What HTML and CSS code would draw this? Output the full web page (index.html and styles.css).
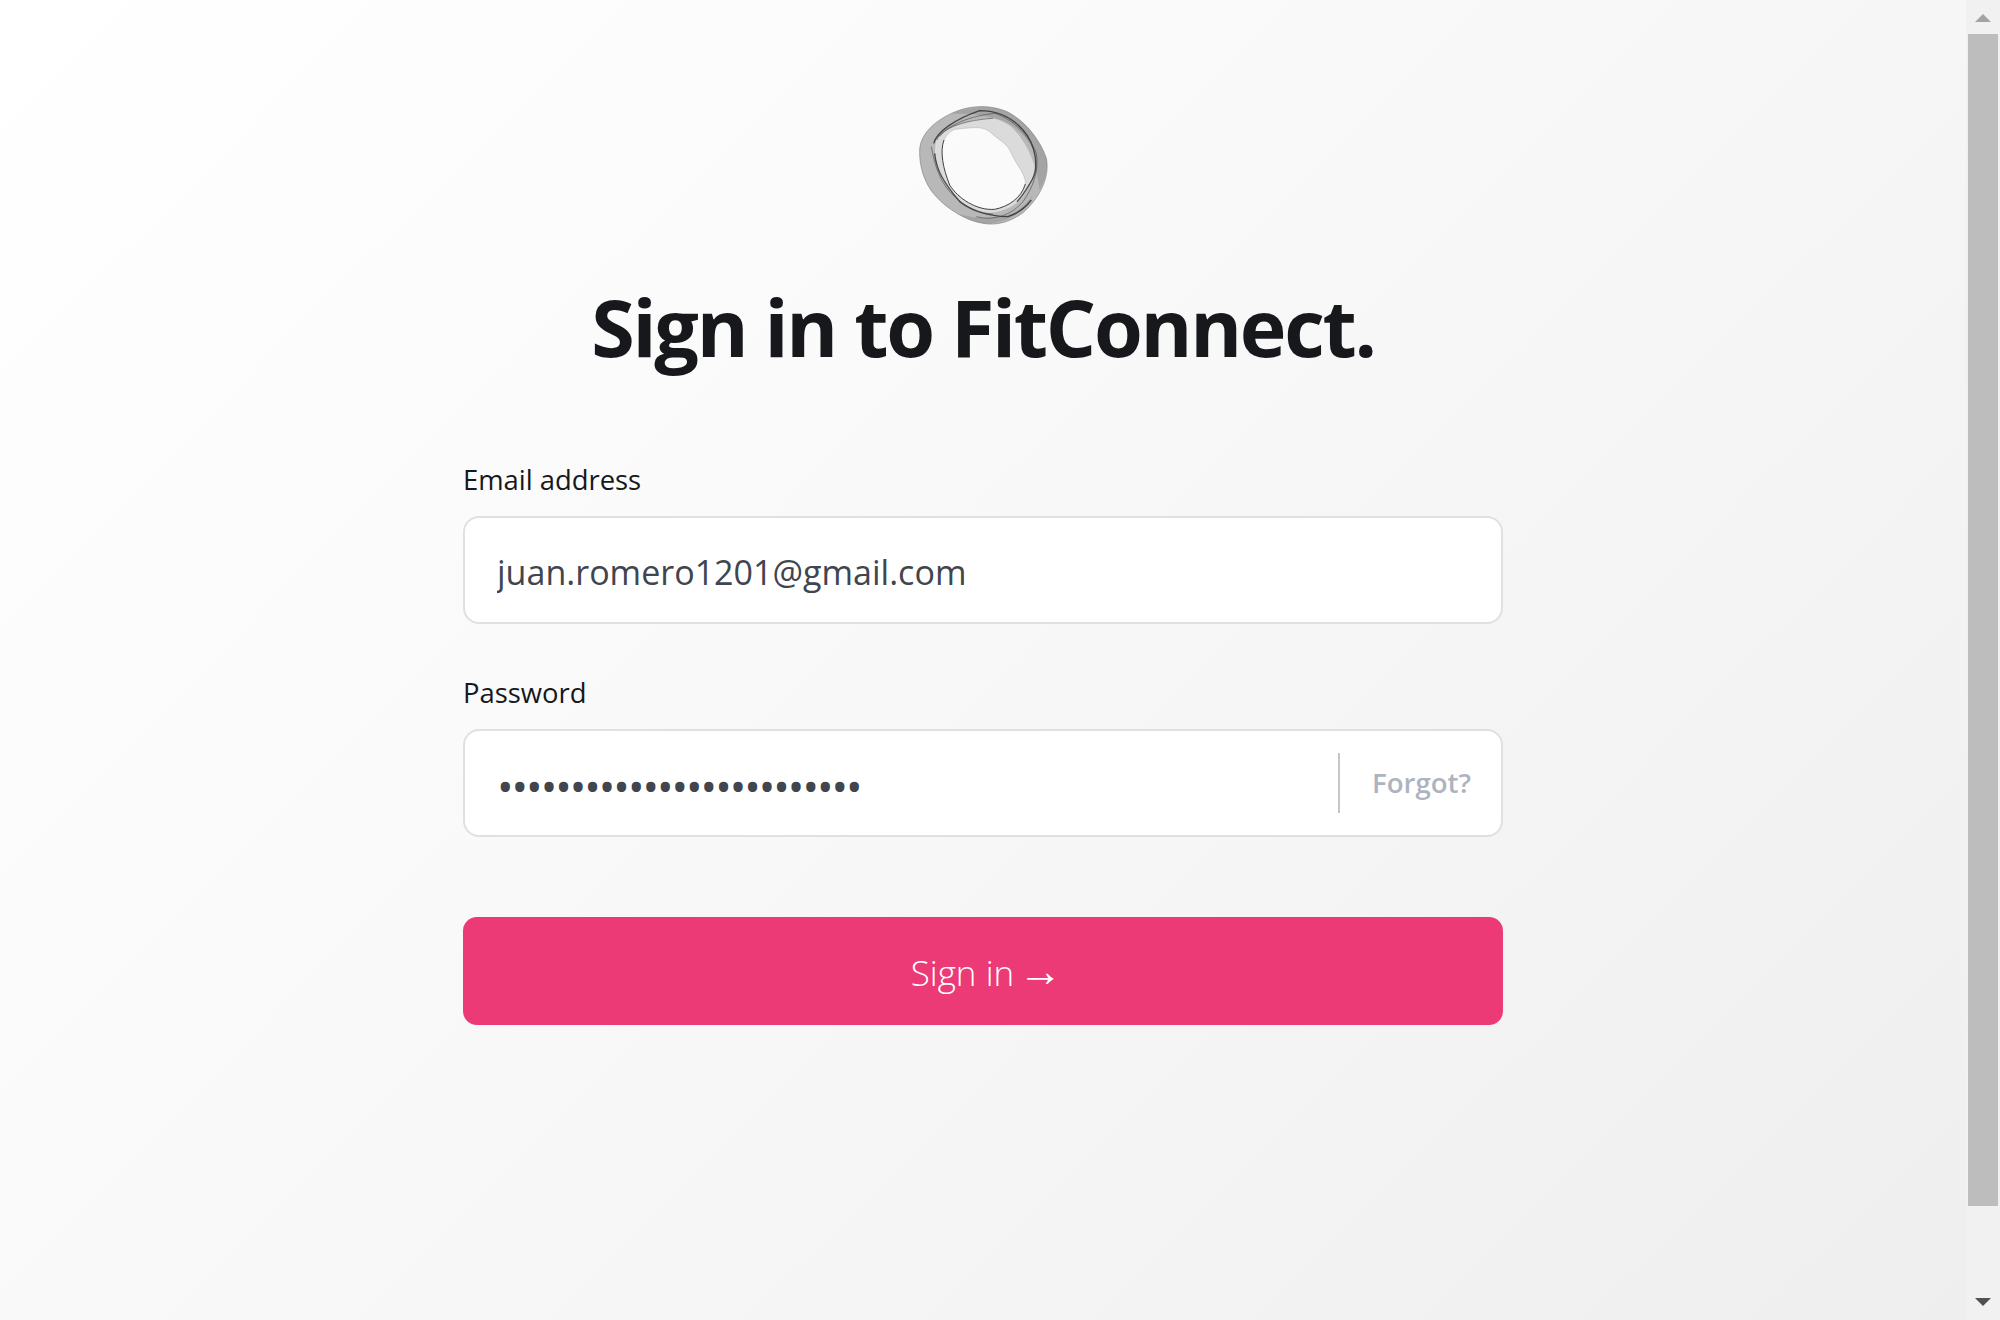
FILE: index.html
```html
<!DOCTYPE html>
<html lang="en">
<head>
<meta charset="utf-8">
<title>Sign in to FitConnect</title>
<link rel="stylesheet" href="styles.css">
</head>
<body>
<div class="page">
  <main class="content">
    <svg class="logo" viewBox="100 30 420 390" aria-hidden="true">
      <defs><filter id="soft"><feGaussianBlur stdDeviation="1.2"/></filter></defs>
      <g filter="url(#soft)">
        <path class="ring-light" fill-rule="evenodd" d="M120 180C122 135 160 95 220 68C265 48 320 42 375 62C430 85 480 145 500 205C512 260 480 325 430 368C395 395 350 408 310 400C260 392 205 360 165 315C135 280 118 230 120 180ZM193 150C180 185 190 235 210 285C235 325 290 362 345 358C385 350 425 325 437 282C440 255 410 225 395 190C385 160 350 145 330 125C305 105 265 115 225 118C210 125 200 135 193 150Z"/>
        <path class="ring-band" fill-rule="evenodd" d="M120 180C122 135 160 95 220 68C265 48 320 42 375 62C430 85 480 145 500 205C512 260 480 325 430 368C395 395 350 408 310 400C260 392 205 360 165 315C135 280 118 230 120 180ZM170 150C190 120 260 85 340 85C390 88 445 140 465 190C472 235 455 285 430 320C405 350 360 372 310 368C270 360 225 325 190 270C170 230 160 190 170 150Z"/>
        <path class="ring-band" fill-rule="evenodd" d="M215 72C265 50 325 45 375 62C430 85 480 145 500 205C505 235 497 270 480 300C470 230 450 165 395 110C345 75 270 70 215 72Z"/>
        <path class="ring-band" fill-rule="evenodd" d="M240 372C290 388 350 388 400 370C425 355 445 335 460 315C435 365 385 398 320 401C290 398 262 388 240 372Z"/>
        <path class="line-soft" d="M120 180C122 135 160 95 220 68C265 48 320 42 375 62C430 85 480 145 500 205C512 260 480 325 430 368C395 395 350 408 310 400C260 392 205 360 165 315C135 280 118 230 120 180Z"/>
        <path class="line-dark" d="M162 160C172 125 225 88 300 62C350 62 395 80 430 120C470 165 478 235 457 270C442 295 432 315 412 335"/>
        <path class="line-dark" d="M165 190C170 240 190 275 240 335C275 362 320 378 385 380C415 370 440 350 455 330"/>
        <path class="line-mid" d="M180 140C205 105 270 78 345 70C395 85 445 130 470 190C478 240 462 290 430 335C400 370 350 395 290 380"/>
        <path class="line-mid" d="M155 170C165 225 180 280 225 320C255 350 305 372 340 372"/>
        <path class="line-mid" d="M172 150C180 120 240 92 340 85"/>
        <path class="line-dark-thin" d="M193 150C180 185 190 235 210 285C235 325 290 362 345 358C385 350 425 325 437 282"/>
        <path class="line-hole" d="M193 150C200 135 210 125 225 118C265 115 305 105 330 125C350 145 385 160 395 190C410 225 440 255 437 282"/>
      </g>
    </svg>
    <h1 class="title">Sign in to FitConnect.</h1>
    <form class="form">
      <div class="field">
        <label class="label" for="email">Email address</label>
        <div class="control">
          <input class="input" id="email" type="email" value="juan.romero1201@gmail.com">
        </div>
      </div>
      <div class="field">
        <label class="label" for="password">Password</label>
        <div class="control">
          <input class="input input-secret" id="password" type="password" value="aaaaaaaaaaaaaaaaaaaaaaaaa">
          <span class="forgot">Forgot?</span>
        </div>
      </div>
      <button class="submit" type="button"><span class="submit-label">Sign in</span> <span class="submit-arrow">→</span></button>
    </form>
  </main>
  <aside class="scrollbar" aria-hidden="true">
    <span class="arrow arrow-up"></span>
    <span class="thumb"></span>
    <span class="arrow arrow-down"></span>
  </aside>
</div>
</body>
</html>
```
FILE: styles.css
```css
* { box-sizing: border-box; }
html, body { margin: 0; height: 100%; overflow: hidden; }
body { font-family: "Open Sans", "Noto Sans", sans-serif; color: #16181c; }
.page {
  display: flex;
  height: 1320px;
  background: linear-gradient(135deg, #ffffff 0%, #fbfbfb 30%, #f5f5f5 65%, #eeeeee 100%);
}
.content {
  flex: 1;
  display: flex;
  flex-direction: column;
  align-items: center;
  padding-top: 100px;
}
.logo { width: 140px; height: 130px; display: block; }
.ring-light { fill: #d8d8d8; fill-opacity: .9; }
.ring-band { fill: #8c8c8c; fill-opacity: .45; }
.line-soft, .line-hole, .line-mid, .line-dark, .line-dark-thin { fill: none; }
.line-soft { stroke: #777; stroke-width: 3; stroke-opacity: .55; }
.line-hole { stroke: #999; stroke-width: 2; stroke-opacity: .6; }
.line-mid { stroke: #444; stroke-width: 2.5; stroke-opacity: .7; }
.line-dark { stroke: #222; stroke-width: 4; stroke-opacity: .75; }
.line-dark-thin { stroke: #222; stroke-width: 3; stroke-opacity: .85; }
.title {
  margin: 47px 0 0;
  font-size: 79px;
  line-height: 100px;
  font-weight: 700;
  letter-spacing: -2.3px;
  color: #16181c;
}
.form { width: 1040px; margin-top: 85px; display: flex; flex-direction: column; }
.field { display: flex; flex-direction: column; margin-bottom: 51px; }
.label { font-size: 27.4px; line-height: 36px; font-weight: 500; margin-bottom: 18px; color: #16181c; }
.control {
  display: flex;
  align-items: center;
  height: 108px;
  background: #fff;
  border: 2px solid #e0e0e0;
  border-radius: 16px;
  padding-right: 30px;
}
.input {
  flex: 1;
  min-width: 0;
  height: 100%;
  border: 0;
  outline: 0;
  background: transparent;
  padding: 4px 0 0 32px;
  font: 400 34.05px "Open Sans", sans-serif;
  color: #40454e;
}
.input-secret { font-size: 44px; letter-spacing: -2px; padding-top: 6px; }
.forgot {
  border-left: 2px solid #c6c6c6;
  height: 60px;
  line-height: 58px;
  padding-left: 32px;
  font-size: 27.6px;
  font-weight: 600;
  color: #adb3bf;
}
.submit {
  margin-top: 29px;
  height: 108px;
  border: 0;
  border-radius: 14px;
  background: #ec3a76;
  color: #fff;
  font: 300 35px "Open Sans", sans-serif;
  word-spacing: -5px;
  padding: 2px 0 0 7px;
}
.submit-label { word-spacing: 0; }
.submit-arrow {
  font-family: "Liberation Sans", sans-serif;
  font-size: 44px;
  line-height: 0;
  font-weight: 400;
}
.scrollbar {
  width: 34px;
  background: #f1f1f1;
  display: flex;
  flex-direction: column;
  align-items: center;
}
.arrow { width: 0; height: 0; border-left: 8px solid transparent; border-right: 8px solid transparent; }
.arrow-up { margin: 14px 0 12px; border-bottom: 8px solid #a3a3a3; }
.thumb { width: 30px; flex: 1; background: #bdbdbd; }
.arrow-down { margin: 92px 0 14px; border-top: 8px solid #505050; }
```
